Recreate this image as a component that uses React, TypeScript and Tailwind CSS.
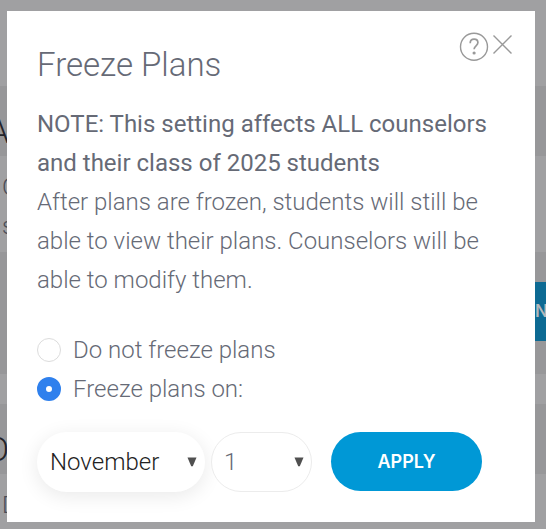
import { useState, type FormEvent } from 'react'

const MONTHS = [
  'January',
  'February',
  'March',
  'April',
  'May',
  'June',
  'July',
  'August',
  'September',
  'October',
  'November',
  'December',
]

const DAYS = Array.from({ length: 31 }, (_, i) => String(i + 1))

function Arrow() {
  return (
    <svg
      viewBox="0 0 10 10"
      className="pointer-events-none absolute top-1/2 right-2 h-[10px] w-[10px] -translate-y-1/2 fill-[#505050]"
      aria-hidden="true"
    >
      <path d="M0.5 0.5h9L5.8 9.2H4.2z" />
    </svg>
  )
}

// Dimmed page that shows around the dialog
function Backdrop() {
  return (
    <div className="flex min-h-screen flex-col bg-[#a0a0a2] text-2xl font-light text-[#4a4d57]" aria-hidden="true">
      <div className="h-[86px]" />
      <div className="flex h-[70px] items-end bg-[#979799] pb-2 text-[34px] leading-[34px] text-[#22232a]">
        <span className="-ml-3">A</span>
      </div>
      <div className="h-24 pt-3 leading-[39px]">
        <p className="pl-[2px]">C</p>
        <p className="pl-[2px]">s</p>
      </div>
      <div className="flex h-[122px] items-start justify-end overflow-hidden bg-[#979799] pt-[30px]">
        <div className="-mr-12 flex h-[59px] w-20 items-center bg-[#0d6a93] pl-6 font-[Inter] text-[17px] font-semibold text-[#b4b8bc]">
          <span className="-ml-4">ON</span>
        </div>
      </div>
      <div className="h-[30px]" />
      <div className="flex h-[70px] items-end overflow-hidden bg-[#979799] pb-2 text-[34px] leading-[34px] text-[#22232a]">
        <span className="-ml-3.5">O</span>
      </div>
      <div className="pt-3 pl-[2px] leading-[39px]">D</div>
    </div>
  )
}

export default function App() {
  const [mode, setMode] = useState('date')
  const [month, setMonth] = useState('November')
  const [day, setDay] = useState('1')

  const handleSubmit = (e: FormEvent) => {
    e.preventDefault()
  }

  const radioClass =
    'mt-[7px] h-6 w-6 shrink-0 cursor-pointer appearance-none rounded-full border border-[#dcdcdc] bg-white checked:border-[9px] checked:border-[#2f80ed]'

  return (
    <div className="relative min-h-screen overflow-hidden font-[Roboto,sans-serif]">
      <Backdrop />

      <div className="absolute inset-0 pt-[11px] pr-[11px] pb-[7px] pl-[7px]">
        <div
          role="dialog"
          aria-labelledby="dialog-title"
          className="h-full bg-white px-[30px] pt-5 text-2xl leading-[39px] font-light text-[#666a76]"
        >
          {/* Header */}
          <div className="flex items-start justify-between">
            <h1 id="dialog-title" className="pt-2 text-[33px] leading-[52px]">
              Freeze Plans
            </h1>
            <div className="-mr-[10px] flex items-start text-[#999]">
              <button type="button" aria-label="Help" className="cursor-pointer">
                <svg viewBox="0 0 30 30" className="h-[30px] w-[30px]" fill="none" stroke="currentColor">
                  <circle cx="15" cy="15.8" r="13.5" strokeWidth="1.4" />
                  <path
                    d="M11.2 12.2c0-2.6 1.5-4.1 3.9-4.1 2.3 0 3.8 1.4 3.8 3.5 0 3.2-3.8 3.2-3.8 6.6"
                    strokeWidth="1.7"
                  />
                  <circle cx="15.1" cy="22" r="1.6" fill="currentColor" stroke="none" />
                </svg>
              </button>
              <button type="button" aria-label="Close" className="cursor-pointer">
                <svg viewBox="0 0 26 30" className="h-[30px] w-[26px]" fill="none" stroke="currentColor">
                  <path d="M4.5 4.5l18 18M22.5 4.5l-18 18" strokeWidth="1.4" />
                </svg>
              </button>
            </div>
          </div>

          <p className="pt-[14px]">
            <strong className="font-normal">
              NOTE: This setting affects ALL counselors and their class of 2025 students
            </strong>
            <br />
            After plans are frozen, students will still be able to view their plans. Counselors will be able to
            modify them.
          </p>

          <form onSubmit={handleSubmit}>
            <div className="pt-[31px]">
              <label className="flex cursor-pointer items-start gap-3">
                <input
                  type="radio"
                  name="freeze"
                  checked={mode === 'none'}
                  onChange={() => setMode('none')}
                  className={radioClass}
                />
                Do not freeze plans
              </label>
              <label className="flex cursor-pointer items-start gap-3">
                <input
                  type="radio"
                  name="freeze"
                  checked={mode === 'date'}
                  onChange={() => setMode('date')}
                  className={radioClass}
                />
                Freeze plans on:
              </label>
            </div>

            {/* Date */}
            <div className="flex items-start pt-[23px]">
              <div className="relative">
                <select
                  aria-label="Month"
                  value={month}
                  onChange={(e) => setMonth(e.target.value)}
                  className="block h-[60px] w-[168px] appearance-none rounded-full bg-white pl-[13px] text-[#222] shadow-[0_4px_20px_rgba(0,0,0,0.09)]"
                >
                  {MONTHS.map((name) => (
                    <option key={name}>{name}</option>
                  ))}
                </select>
                <Arrow />
              </div>
              <div className="relative ml-[6px]">
                <select
                  aria-label="Day"
                  value={day}
                  onChange={(e) => setDay(e.target.value)}
                  className="block h-[60px] w-[101px] appearance-none rounded-full border border-[#ececec] bg-white pl-3"
                >
                  {DAYS.map((name) => (
                    <option key={name}>{name}</option>
                  ))}
                </select>
                <Arrow />
              </div>
              <button
                type="submit"
                className="ml-[19px] h-[59px] w-[151px] cursor-pointer rounded-full bg-[#0098d6] font-[Inter] text-[18px] font-semibold text-white"
              >
                APPLY
              </button>
            </div>
          </form>
        </div>
      </div>
    </div>
  )
}
